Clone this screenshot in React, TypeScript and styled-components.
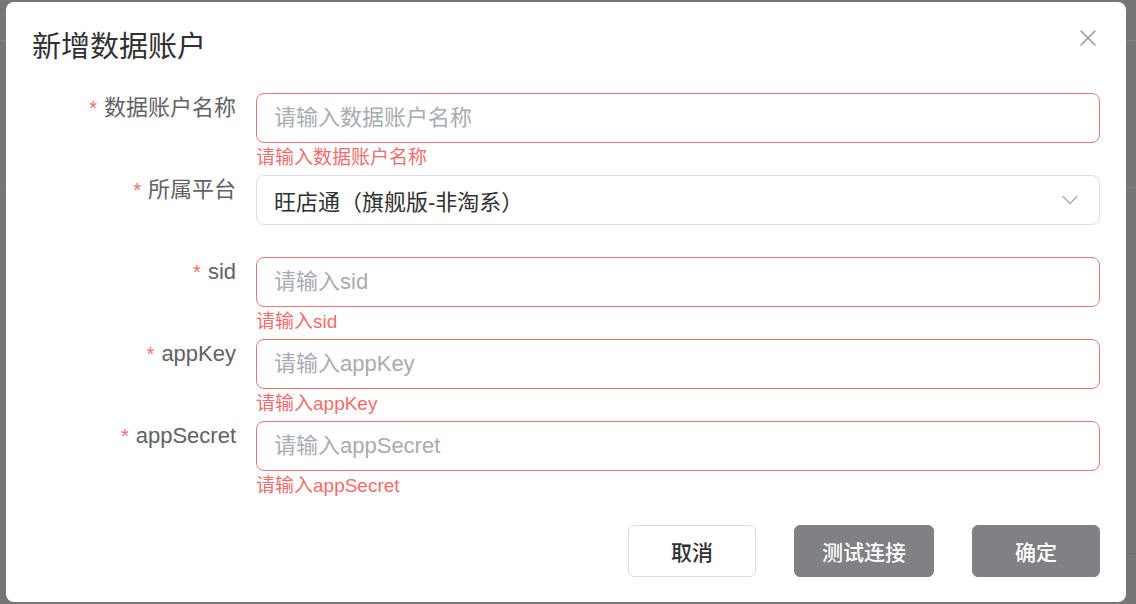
import React from 'react'
import styled, { createGlobalStyle } from 'styled-components'

const GlobalStyle = createGlobalStyle`
  html, body {
    margin: 0;
    padding: 0;
  }
  body {
    font-family: 'Liberation Sans', 'Noto Sans CJK SC', sans-serif;
    background: #767676;
  }
  * {
    box-sizing: border-box;
  }
`

interface Field {
  label: string
  placeholder?: string
  value?: string
  error?: string
}

const fields: Field[] = [
  { label: '数据账户名称', placeholder: '请输入数据账户名称', error: '请输入数据账户名称' },
  { label: '所属平台', value: '旺店通（旗舰版-非淘系）' },
  { label: 'sid', placeholder: '请输入sid', error: '请输入sid' },
  { label: 'appKey', placeholder: '请输入appKey', error: '请输入appKey' },
  { label: 'appSecret', placeholder: '请输入appSecret', error: '请输入appSecret' },
]

const CloseIcon = () => (
  <svg width='16' height='16' viewBox='0 0 16 16' fill='none'>
    <path d='M1 1L15 15M15 1L1 15' stroke='#8e9096' strokeWidth='1.4' strokeLinecap='round' />
  </svg>
)

const ChevronIcon = () => (
  <svg width='16' height='10' viewBox='0 0 16 10' fill='none'>
    <path d='M1 1.5L8 8.5L15 1.5' stroke='#a8abb2' strokeWidth='1.4' strokeLinecap='round' strokeLinejoin='round' />
  </svg>
)

const App = () => {
  return (
    <>
      <GlobalStyle />
      <Page>
        <Modal>
          <Header>
            <Title>新增数据账户</Title>
            <CloseButton aria-label='close'>
              <CloseIcon />
            </CloseButton>
          </Header>

          <Form>
            {fields.map((field) => (
              <Item key={field.label}>
                <Label>
                  <Required>*</Required>
                  {field.label}
                </Label>
                <Control>
                  {field.value ? (
                    <SelectBox>
                      <span>{field.value}</span>
                      <ChevronIcon />
                    </SelectBox>
                  ) : (
                    <Input placeholder={field.placeholder} $invalid={!!field.error} />
                  )}
                  <ErrorSlot>{field.error}</ErrorSlot>
                </Control>
              </Item>
            ))}
          </Form>

          <Footer>
            <Button $variant='plain'>取消</Button>
            <Button $variant='gray'>测试连接</Button>
            <Button $variant='gray'>确定</Button>
          </Footer>
        </Modal>
      </Page>
    </>
  )
}

const Page = styled.div`
  width: 1136px;
  height: 604px;
  padding: 2px 10px 2px 6px;
  background:
    linear-gradient(#838383, #838383) 0 40px / 100% 1px no-repeat,
    linear-gradient(#7e7e7e, #7e7e7e) 0 187px / 100% 1px no-repeat,
    linear-gradient(#6f6f6f, #6f6f6f) 0 553px / 100% 1px no-repeat,
    #767676;
`

const Modal = styled.div`
  width: 1120px;
  height: 600px;
  background: #fff;
  border-radius: 8px;
  display: flex;
  flex-direction: column;
`

const Header = styled.div`
  display: flex;
  justify-content: space-between;
  align-items: flex-start;
  height: 62px;
  padding: 27px 30px 0 26px;
`

const Title = styled.h2`
  margin: 0;
  font-size: 29px;
  line-height: 36px;
  font-weight: 400;
  color: #303133;
`

const CloseButton = styled.button`
  margin-top: 1px;
  padding: 0;
  border: 0;
  background: none;
  width: 16px;
  height: 16px;
  display: flex;
  cursor: pointer;
`

const Form = styled.div`
  padding: 29px 26px 0 26px;
  display: flex;
  flex-direction: column;
`

const Item = styled.div`
  display: grid;
  grid-template-columns: 224px 1fr;
`

const Label = styled.label`
  padding-right: 20px;
  text-align: right;
  font-size: 22px;
  line-height: 30px;
  color: #606266;
`

const Required = styled.span`
  color: #f56c6c;
  margin-right: 7px;
  font-size: 20px;
`

const Control = styled.div`
  display: flex;
  flex-direction: column;
`

const Input = styled.input<{ $invalid?: boolean }>`
  height: 50px;
  width: 100%;
  padding: 0 17px;
  border: 1px solid ${({ $invalid }) => ($invalid ? '#ec7676' : '#dcdfe6')};
  border-radius: 8px;
  font-family: inherit;
  font-size: 22px;
  color: #303133;
  outline: none;

  &::placeholder {
    color: #a8abb2;
  }
`

const SelectBox = styled.div`
  height: 50px;
  display: flex;
  align-items: center;
  justify-content: space-between;
  padding: 0 21px 0 17px;
  border: 1px solid #dcdfe6;
  border-radius: 8px;
  font-size: 22px;
  color: #303133;
`

const ErrorSlot = styled.div`
  height: 32px;
  padding-top: 4px;
  font-size: 19px;
  line-height: 22px;
  color: #f56c6c;
`

const Footer = styled.div`
  display: flex;
  justify-content: flex-end;
  gap: 38px;
  padding: 22px 26px 25px;
`

const Button = styled.button<{ $variant: 'plain' | 'gray' }>`
  height: 52px;
  min-width: 128px;
  padding: 0 27px;
  border-radius: 6px;
  font-family: inherit;
  font-size: 21px;
  font-weight: 500;
  cursor: pointer;
  border: 1px solid ${({ $variant }) => ($variant === 'plain' ? '#dcdfe6' : '#808085')};
  background: ${({ $variant }) => ($variant === 'plain' ? '#fff' : '#808085')};
  color: ${({ $variant }) => ($variant === 'plain' ? '#303133' : '#fff')};
`

export default App
